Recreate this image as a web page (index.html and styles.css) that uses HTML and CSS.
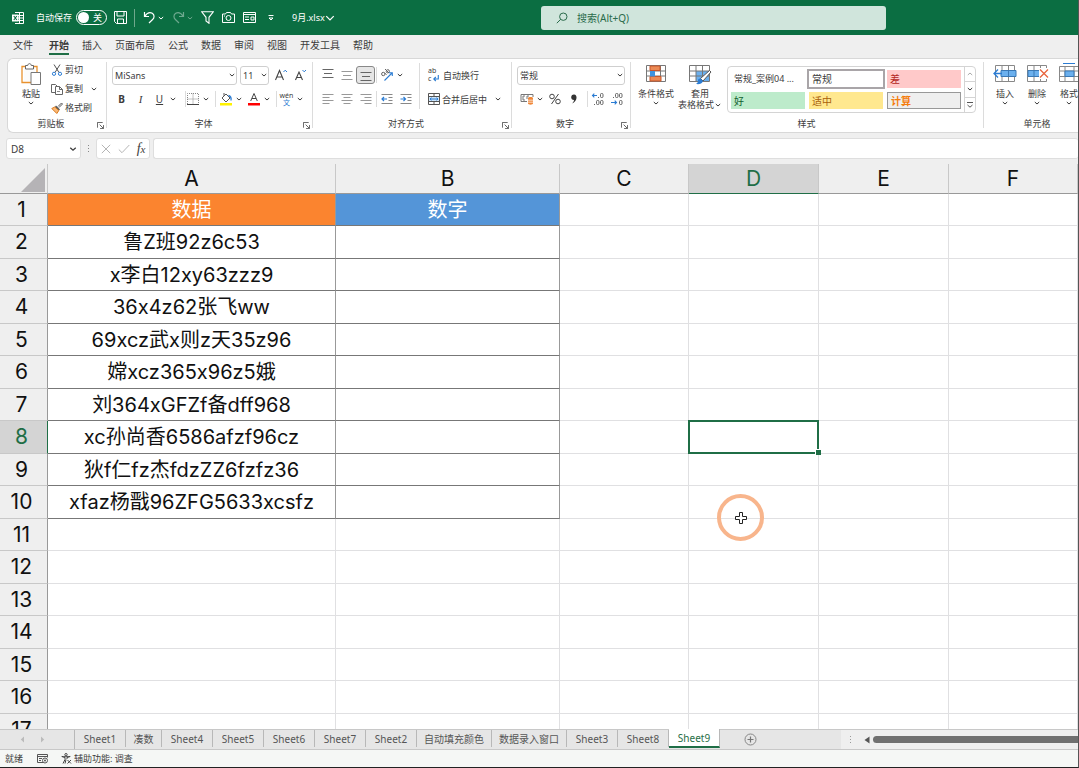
FILE: index.html
```html
<!DOCTYPE html>
<html lang="zh-CN">
<head>
    <meta charset="utf-8">
    <title>9月.xlsx</title>
    <link rel="stylesheet" href="styles.css">
</head>
<body>
    <svg class="sprite" aria-hidden="true">
        <symbol id="chev" viewBox="0 0 8 8"><path d="M1.800 3 4 5 6.200 3" fill="none" stroke="currentColor"/></symbol>
        <symbol id="launch" viewBox="0 0 8 8"><path d="M.5 6.500V.5H6.500M3 3l4 4M7.500 3.500v4h-4" fill="none" stroke="currentColor" stroke-width=".9"/></symbol>
    </svg>

    <header class="titlebar">
        <div class="quick">
            <svg class="logo" width="14" height="14" viewBox="0 0 14 14"><path d="M4 1.500h8.500v11H4M8.500 1.500v11M4 4.500h8.500M4 7h8.500M4 9.500h8.500" fill="none" stroke="#fff"/><path d="M1 3.500h6.500v7H1z" fill="#fff"/><path d="m2.800 5 3 4M5.800 5l-3 4" stroke="#0b6e42" stroke-width="1.100"/></svg>
            <span class="autosave-text">自动保存</span>
            <label class="switch"><input type="checkbox" aria-label="自动保存"><span>关</span></label>
            <button class="qbtn save" aria-label="保存"><svg width="13" height="13" viewBox="0 0 13 13"><path d="M.5.5h12v12h-10l-2-2zM3 .5v4.500h7V.5M3.500 12.500V8h6v4.500" fill="none" stroke="#fff"/></svg></button>
            <span class="qsep"></span>
            <button class="qbtn" aria-label="撤消"><svg width="13" height="13" viewBox="0 0 13 13"><path d="M1.500 1v4.500H6M1.700 5.300C4 2 7 .8 9.300 2.300c2.500 1.700 2 4.600.3 6.200L6 12" fill="none" stroke="#fff" stroke-width="1.200"/></svg></button>
            <svg class="qchev" width="8" height="8"><use href="#chev"/></svg>
            <button class="qbtn faded" aria-label="恢复"><svg width="13" height="13" viewBox="0 0 13 13"><path d="M11.500 1v4.500H7M11.300 5.300C9 2 6 .8 3.700 2.300c-2.500 1.700-2 4.600-.3 6.200L7 12" fill="none" stroke="#fff" stroke-width="1.200"/></svg></button>
            <svg class="qchev faded" width="8" height="8"><use href="#chev"/></svg>
            <button class="qbtn" aria-label="筛选"><svg width="13" height="13" viewBox="0 0 13 13"><path d="M.7.8h11.600L8 6.300v6L5 10V6.300z" fill="none" stroke="#fff" stroke-width="1.100"/></svg></button>
            <button class="qbtn wide" aria-label="照相机"><svg width="13" height="13" viewBox="0 0 13 13"><path d="M.5 3h3l1-1.500h4l1 1.500h3v8.500H.5z" fill="none" stroke="#fff"/><circle cx="6.500" cy="7" r="2.500" fill="none" stroke="#fff"/><path d="M2 5h1" stroke="#fff"/></svg></button>
            <button class="qbtn wide" aria-label="记录单"><svg width="13" height="13" viewBox="0 0 13 13"><path d="M.5 1.500h12v10H.5zM.5 3.500h12M2 6h4M2 8.500h4M8 6h3v3H8z" fill="none" stroke="#fff"/></svg></button>
            <button class="qbtn wide" aria-label="自定义"><svg width="8" height="8" viewBox="0 0 8 8"><path d="M1.500 1.500h5M2 4l2 2 2-2z" fill="none" stroke="#fff"/></svg></button>
            <button class="filename">9月.xlsx<svg width="10" height="10" viewBox="0 0 8 8"><path d="M1 2.500 4 5.500l3-3" fill="none" stroke="#fff"/></svg></button>
        </div>
        <label class="search">
            <svg width="12" height="12" viewBox="0 0 12 12"><circle cx="7.300" cy="4.700" r="3.700" fill="none" stroke="#2a6b4b"/><path d="M4.700 7.300.8 11.200" stroke="#2a6b4b"/></svg>
            <input type="text" placeholder="搜索(Alt+Q)">
        </label>
    </header>

    <nav class="menu">
        <button class="file">文件</button>
        <button class="active">开始</button>
        <button>插入</button>
        <button>页面布局</button>
        <button>公式</button>
        <button>数据</button>
        <button>审阅</button>
        <button>视图</button>
        <button>开发工具</button>
        <button>帮助</button>
    </nav>

    <section class="ribbon">
        <div class="group clipboard">
            <div class="body">
                <button class="big paste">
                    <svg width="22" height="22" viewBox="0 0 22 22"><path d="M2 3.500h15v16H2z" fill="#fff" stroke="#e8912d" stroke-width="1.300"/><path d="M4 5h11v13H4z" fill="#fbfbfb"/><path d="M5.500 2.500h2.200c.3-2.500 3.300-2.500 3.600 0h2.200V6h-8z" fill="#fff" stroke="#666"/><path d="M11 9.500h9.500v12H11z" fill="#fff" stroke="#777"/></svg>
                    <span>粘贴</span>
                    <svg width="8" height="8"><use href="#chev"/></svg>
                </button>
                <div class="stack">
                    <button class="cmd"><svg width="12" height="12" viewBox="0 0 12 12"><path d="M3 .5 8 8.500M9 .5 4 8.500" stroke="#555" fill="none"/><circle cx="3" cy="9.800" r="1.600" fill="none" stroke="#2b7cd3"/><circle cx="9" cy="9.800" r="1.600" fill="none" stroke="#2b7cd3"/></svg>剪切</button>
                    <button class="cmd"><svg width="12" height="12" viewBox="0 0 12 12"><path d="M4 9.500H.5V1.500h4l1.500 1.500" fill="none" stroke="#666"/><path d="M4.500 3.500h4l3 3v5h-7zM8.500 3.500v3h3" fill="#fff" stroke="#666"/><path d="M6 8.500h3" stroke="#888"/></svg>复制<svg class="far" width="8" height="8"><use href="#chev"/></svg></button>
                    <button class="cmd"><svg width="12" height="12" viewBox="0 0 12 12"><path d="M7 4.500 10.500 1l1 1L8 5.500" fill="#fff" stroke="#555"/><path d="M5 3.500 9 7.500 7.800 8.500 4 4.700z" fill="#555"/><path d="M3.800 5 .8 6.500l5 5 2-3z" fill="#f9b877" stroke="#d97a1c"/></svg>格式刷</button>
                </div>
            </div>
            <div class="caption">剪贴板<svg class="launch" width="7" height="7"><use href="#launch"/></svg></div>
        </div>

        <div class="group font">
            <div class="line">
                <label class="combo name"><select aria-label="字体"><option>MiSans</option></select><svg width="8" height="8"><use href="#chev"/></svg></label>
                <label class="combo size"><select aria-label="字号"><option>11</option></select><svg width="8" height="8"><use href="#chev"/></svg></label>
                <button class="tool" aria-label="增大字号"><svg width="14" height="14" viewBox="0 0 14 14"><path d="M.5 12 4.500 2.500 8.500 12M2 9h5" fill="none" stroke="#444" stroke-width="1.100"/><path d="m8.500 4 1.700-1.800L12 4" fill="none" stroke="#2b7cd3"/></svg></button>
                <button class="tool" aria-label="减小字号"><svg width="14" height="14" viewBox="0 0 14 14"><path d="M1.500 12 5 4l3.500 8M3 9.500h4" fill="none" stroke="#444" stroke-width="1.100"/><path d="m8.500 2 1.700 1.800L12 2" fill="none" stroke="#2b7cd3"/></svg></button>
            </div>
            <div class="line">
                <button class="tool"><b>B</b></button>
                <button class="tool"><i>I</i></button>
                <button class="tool"><u>U</u></button>
                <svg class="chev" width="8" height="8"><use href="#chev"/></svg>
                <span class="sep after-chev"></span>
                <button class="tool slim" aria-label="边框"><svg width="12" height="12" viewBox="0 0 12 12"><path d="M.5 11V.5h11V11M6 .5V11M.5 6h11" fill="none" stroke="#888" stroke-dasharray="1 1"/><path d="M0 11.500h12" stroke="#444"/></svg></button>
                <svg class="chev" width="8" height="8"><use href="#chev"/></svg>
                <span class="sep"></span>
                <button class="tool" aria-label="填充颜色"><svg width="14" height="14" viewBox="0 0 14 14"><path d="m3 6 4-4 4 4-4 4zM5 3.800V1" fill="none" stroke="#555"/><path d="M9.500 3.500c2 .5 3 2 2.500 5" fill="none" stroke="#2b7cd3" stroke-width="1.300"/><path d="M1 11h12v2.500H1z" fill="#fff200"/></svg></button>
                <svg class="chev" width="8" height="8"><use href="#chev"/></svg>
                <button class="tool" aria-label="字体颜色"><svg width="14" height="14" viewBox="0 0 14 14"><path d="M3.700 9 7 1.500 10.300 9M5 6.500h4" fill="none" stroke="#444"/><path d="M1 11h12v2.500H1z" fill="#f00"/></svg></button>
                <svg class="chev" width="8" height="8"><use href="#chev"/></svg>
                <span class="sep"></span>
                <button class="tool pinyin"><span>wén</span><em>文</em></button>
                <svg class="chev" width="8" height="8"><use href="#chev"/></svg>
            </div>
            <div class="caption">字体<svg class="launch" width="7" height="7"><use href="#launch"/></svg></div>
        </div>

        <div class="group align">
            <div class="body">
                <div class="stack">
                    <div class="line">
                        <button class="tool" aria-label="顶端对齐"><svg width="12" height="14" viewBox="0 0 12 14"><path d="M.5 1.500h11M2 5.500h8M.5 9.500h11" stroke="#666"/></svg></button>
                        <button class="tool" aria-label="垂直居中"><svg width="12" height="14" viewBox="0 0 12 14"><path d="M.5 3.500h11M2 7.500h8M.5 11.500h11" stroke="#999"/></svg></button>
                        <button class="tool pressed" aria-label="底端对齐"><svg width="12" height="14" viewBox="0 0 12 14"><path d="M.5 4.500h11M2 8.500h8M.5 12.500h11" stroke="#666"/></svg></button>
                        <span class="sep tight"></span>
                        <button class="tool" aria-label="方向"><svg width="14" height="14" viewBox="0 0 14 14"><circle cx="3.300" cy="6" r="1.700" fill="none" stroke="#666"/><path d="m4.500 4.800 2 2M5 1l4 4" stroke="#666"/><circle cx="7.800" cy="3.300" r="1.600" fill="none" stroke="#666"/><path d="M4.500 12.500 12 5M9 4.700h3.300V8" fill="none" stroke="#2b7cd3" stroke-width="1.100"/></svg></button>
                        <svg class="chev" width="8" height="8"><use href="#chev"/></svg>
                    </div>
                    <div class="line">
                        <button class="tool" aria-label="左对齐"><svg width="12" height="12" viewBox="0 0 12 12"><path d="M.5 1.500h11M.5 4.500h7M.5 7.500h11M.5 10.500h7" stroke="#999"/></svg></button>
                        <button class="tool" aria-label="居中"><svg width="12" height="12" viewBox="0 0 12 12"><path d="M.5 1.500h11M2.500 4.500h7M.5 7.500h11M2.500 10.500h7" stroke="#999"/></svg></button>
                        <button class="tool" aria-label="右对齐"><svg width="12" height="12" viewBox="0 0 12 12"><path d="M.5 1.500h11M4.500 4.500h7M.5 7.500h11M4.500 10.500h7" stroke="#999"/></svg></button>
                        <span class="sep tight"></span>
                        <button class="tool" aria-label="减少缩进"><svg width="12" height="12" viewBox="0 0 12 12"><path d="M.5 1.500h11M7.500 4.500h4M7.500 7.500h4M.5 10.500h11" stroke="#888"/><path d="M6 6H1M3 4 1 6l2 2" fill="none" stroke="#2b7cd3" stroke-width="1.200"/></svg></button>
                        <button class="tool" aria-label="增加缩进"><svg width="12" height="12" viewBox="0 0 12 12"><path d="M.5 1.500h11M7.500 4.500h4M7.500 7.500h4M.5 10.500h11" stroke="#888"/><path d="M.5 6h5M3.500 4l2 2-2 2" fill="none" stroke="#2b7cd3" stroke-width="1.200"/></svg></button>
                    </div>
                </div>
                <span class="sep long"></span>
                <div class="stack">
                    <div class="line">
                        <button class="cmd"><span class="wrap-icon"><span>ab</span><span>c<svg width="6" height="7" viewBox="0 0 6 7"><path d="M5.300 0v4H.8M2.800 2l-2 2 2 2" fill="none" stroke="#2b7cd3" stroke-width="1.100"/></svg></span></span>自动换行</button>
                    </div>
                    <div class="line">
                        <button class="cmd"><svg width="12" height="12" viewBox="0 0 12 12"><path d="M.5 3.500h11v5H.5z" fill="#cfe6fa"/><path d="M.5.5h11v11H.5zM.5 3.500h11M.5 8.500h11M6 .5v3M6 8.500v3" fill="none" stroke="#555"/><path d="M2 6h8M3.500 4.700 2 6l1.500 1.300M8.500 4.700 10 6 8.500 7.300" fill="none" stroke="#2b7cd3"/></svg>合并后居中<svg class="far" width="8" height="8"><use href="#chev"/></svg></button>
                    </div>
                </div>
            </div>
            <div class="caption">对齐方式<svg class="launch" width="7" height="7"><use href="#launch"/></svg></div>
        </div>

        <div class="group number">
            <div class="line">
                <label class="combo format"><select aria-label="数字格式"><option>常规</option></select><svg width="8" height="8"><use href="#chev"/></svg></label>
            </div>
            <div class="line">
                <button class="tool" aria-label="会计数字格式"><svg width="14" height="14" viewBox="0 0 14 14"><path d="M13 5V2.500H1v7h6" fill="none" stroke="#777"/><path d="M5 4H3v4h2M9 4H7v3" fill="none" stroke="#777"/><path d="M8 6c0-1.500 5-1.500 5 0v5.500c0 1.500-5 1.500-5 0z" fill="#f0883a"/><path d="M8 8.200h5M8 10.200h5" stroke="#fff" stroke-width=".7"/></svg></button>
                <svg class="chev" width="8" height="8"><use href="#chev"/></svg>
                <button class="tool" aria-label="百分比"><svg width="12" height="12" viewBox="0 0 12 12"><circle cx="3" cy="3.500" r="2.300" fill="none" stroke="#444"/><circle cx="9" cy="8.500" r="2.300" fill="none" stroke="#444"/><path d="M9.500 1 2.500 11" stroke="#444"/></svg></button>
                <button class="tool" aria-label="千位分隔"><svg width="8" height="12" viewBox="0 0 8 12"><path d="M4 1.500c3.500 0 4 6.500-2 9C3.500 9 4 8 4 7 .3 7 .3 1.500 4 1.500z" fill="#333"/></svg></button>
                <span class="sep"></span>
                <button class="tool" aria-label="增加小数位数"><svg width="14" height="14" viewBox="0 0 14 14"><path d="M6 3.500H1.500M3.300 1.700 1.500 3.500l1.800 1.800" fill="none" stroke="#2b7cd3" stroke-width="1.100"/><rect x="9.500" y="1.500" width="2.500" height="4" rx="1" fill="none" stroke="#666"/><rect x="5.500" y="8.500" width="2.500" height="4" rx="1" fill="none" stroke="#666"/><rect x="9.500" y="8.500" width="2.500" height="4" rx="1" fill="none" stroke="#666"/><path d="M3 12.500h1M7 5.500h1" stroke="#666"/></svg></button>
                <button class="tool" aria-label="减少小数位数"><svg width="14" height="14" viewBox="0 0 14 14"><path d="M1 10.500h5.500M4.700 8.700l1.800 1.800-1.800 1.800" fill="none" stroke="#2b7cd3" stroke-width="1.100"/><rect x="5.500" y="1.500" width="2.500" height="4" rx="1" fill="none" stroke="#666"/><rect x="9.500" y="1.500" width="2.500" height="4" rx="1" fill="none" stroke="#666"/><rect x="9.500" y="8.500" width="2.500" height="4" rx="1" fill="none" stroke="#666"/><path d="M3 5.500h1" stroke="#666"/></svg></button>
            </div>
            <div class="caption">数字<svg class="launch" width="7" height="7"><use href="#launch"/></svg></div>
        </div>

        <div class="group styles">
            <div class="body">
                <button class="big cond">
                    <svg width="22" height="22" viewBox="0 0 22 22"><path d="M1.500 2.500h19v16h-19zM1.500 8h19M1.500 13h19M6 2.500v16M15.500 2.500v16" fill="#fff" stroke="#777"/><path d="M5 3h10v4.500H5zM5 13.500h11v4.500H5z" fill="#ec8a55" stroke="#c9562a"/><path d="M5 8h5v5.500H5z" fill="#3e93e0"/></svg>
                    <span>条件格式</span>
                    <svg width="8" height="8"><use href="#chev"/></svg>
                </button>
                <button class="big tablefmt">
                    <svg width="24" height="22" viewBox="0 0 24 22"><path d="M1.500 2.500h20v16h-20z" fill="#fff"/><path d="M8 8h13v10H8z" fill="#6bb0ee"/><path d="M1.500 2.500h20v16h-20zM1.500 8h20M1.500 13h20M8 2.500v16M14.500 2.500v16" fill="none" stroke="#777"/><path d="m21.500 7.500 1.500 1.500-8 9-2.500-2.500z" fill="#fff" stroke="#555"/><path d="M12.500 15.500 15 18c-1 3-4 3.500-7 3 1.500-1 2-2 2-3.500 0-1.200 1-2.200 2.500-2z" fill="#2b7cd3"/></svg>
                    <span>套用</span>
                    <span>表格格式<svg width="8" height="8"><use href="#chev"/></svg></span>
                </button>
                <div class="gallery">
                    <div class="cells">
                        <button>常规_案例04 ...</button>
                        <button class="normal">常规</button>
                        <button class="bad">差</button>
                        <button class="good">好</button>
                        <button class="neutral">适中</button>
                        <button class="calc">计算</button>
                    </div>
                    <div class="scroll">
                        <button aria-label="上一行"><svg class="up" width="8" height="8"><use href="#chev"/></svg></button>
                        <button aria-label="下一行"><svg width="8" height="8"><use href="#chev"/></svg></button>
                        <button aria-label="其他"><svg width="8" height="8" viewBox="0 0 8 8"><path d="M1 1.500h6M1.500 4 4 6.200 6.500 4" fill="none" stroke="#555"/></svg></button>
                    </div>
                </div>
            </div>
            <div class="caption plain">样式</div>
        </div>

        <div class="group edit">
            <div class="body">
                <button class="big">
                    <svg width="24" height="22" viewBox="0 0 24 22"><path d="M2.500 2.500h19v16h-19zM9 2.500v16M15.500 2.500v16" fill="#fff" stroke="#888"/><path d="M8 7.500h15v6H8z" fill="#6bb0ee" stroke="#3a78b5"/><path d="M15.500 7.500v6" stroke="#3a78b5"/><path d="M9 10.500H1.500M5 6.500l-4 4 4 4" fill="none" stroke="#2b7cd3" stroke-width="1.300"/></svg>
                    <span>插入</span>
                    <svg width="8" height="8"><use href="#chev"/></svg>
                </button>
                <button class="big">
                    <svg width="24" height="22" viewBox="0 0 24 22"><path d="M2.500 2.500h19v16h-19zM9 2.500v16M15.500 2.500v16" fill="#fff" stroke="#888"/><path d="M3 7.500h12v6H3z" fill="#6bb0ee" stroke="#3a78b5"/><path d="M9 7.500v6" stroke="#3a78b5"/><path d="M14 5h9v11h-9z" fill="#fff"/><path d="m15 6.500 8 8M23 6.500l-8 8" stroke="#e8643c" stroke-width="1.300"/></svg>
                    <span>删除</span>
                    <svg width="8" height="8"><use href="#chev"/></svg>
                </button>
                <button class="big">
                    <svg width="24" height="22" viewBox="0 0 24 22"><path d="M2.500 3.500h19v15h-19zM8 3.500v15M17 3.500v15" fill="#fff" stroke="#888"/><path d="M2.500 8h19M2.500 13.500h19" stroke="#888"/><path d="M8 8h9v5.500H8z" fill="#6bb0ee" stroke="#3a78b5"/><path d="M6 .5h12" stroke="#2b7cd3"/></svg>
                    <span>格式</span>
                    <svg width="8" height="8"><use href="#chev"/></svg>
                </button>
            </div>
            <div class="caption plain">单元格</div>
        </div>
    </section>

    <section class="formula">
        <label class="namebox"><input type="text" value="D8" aria-label="名称框"><svg width="10" height="10"><use href="#chev"/></svg></label>
        <svg class="grip" width="3" height="10" viewBox="0 0 3 10"><path d="M1.500 1v9" stroke="#888" stroke-dasharray="1 2"/></svg>
        <div class="fx">
            <button aria-label="取消"><svg width="10" height="10" viewBox="0 0 10 10"><path d="m.8.8 8.400 8.400M9.200.8.8 9.200" stroke="#b5b5b5"/></svg></button>
            <button aria-label="输入"><svg width="12" height="10" viewBox="0 0 12 10"><path d="M.8 5.500 4 8.700 11.300 1" fill="none" stroke="#b5b5b5"/></svg></button>
            <button class="fn">f<small>x</small></button>
        </div>
        <input class="content" type="text" aria-label="编辑栏">
    </section>

    <main class="sheet">
        <table>
            <colgroup>
                <col class="c-head"><col class="c-a"><col class="c-b"><col class="c-c"><col class="c-d"><col class="c-d"><col>
            </colgroup>
            <thead>
                <tr><th class="corner"><svg width="24" height="24" viewBox="0 0 24 24"><path d="M24 0v24H0z" fill="#b5b3b6"/></svg></th><th>A</th><th>B</th><th>C</th><th class="on">D</th><th>E</th><th>F</th></tr>
            </thead>
            <tbody>
                <tr><th>1</th><td class="box orange">数据</td><td class="box blue">数字</td><td></td><td></td><td></td><td></td></tr>
                <tr><th>2</th><td class="box">鲁Z班92z6c53</td><td class="box"></td><td></td><td></td><td></td><td></td></tr>
                <tr><th>3</th><td class="box">x李白12xy63zzz9</td><td class="box"></td><td></td><td></td><td></td><td></td></tr>
                <tr><th>4</th><td class="box">36x4z62张飞ww</td><td class="box"></td><td></td><td></td><td></td><td></td></tr>
                <tr><th>5</th><td class="box">69xcz武x则z天35z96</td><td class="box"></td><td></td><td></td><td></td><td></td></tr>
                <tr><th>6</th><td class="box">嫦xcz365x96z5娥</td><td class="box"></td><td></td><td></td><td></td><td></td></tr>
                <tr><th>7</th><td class="box">刘364xGFZf备dff968</td><td class="box"></td><td></td><td></td><td></td><td></td></tr>
                <tr><th class="on">8</th><td class="box">xc孙尚香6586afzf96cz</td><td class="box"></td><td></td><td class="selected"></td><td></td><td></td></tr>
                <tr><th>9</th><td class="box">狄f仁fz杰fdzZZ6fzfz36</td><td class="box"></td><td></td><td></td><td></td><td></td></tr>
                <tr><th>10</th><td class="box">xfaz杨戬96ZFG5633xcsfz</td><td class="box"></td><td></td><td></td><td></td><td></td></tr>
                <tr><th>11</th><td></td><td></td><td></td><td></td><td></td><td></td></tr>
                <tr><th>12</th><td></td><td></td><td></td><td></td><td></td><td></td></tr>
                <tr><th>13</th><td></td><td></td><td></td><td></td><td></td><td></td></tr>
                <tr><th>14</th><td></td><td></td><td></td><td></td><td></td><td></td></tr>
                <tr><th>15</th><td></td><td></td><td></td><td></td><td></td><td></td></tr>
                <tr><th>16</th><td></td><td></td><td></td><td></td><td></td><td></td></tr>
                <tr><th>17</th><td></td><td></td><td></td><td></td><td></td><td></td></tr>
            </tbody>
        </table>
        <div class="pointer"><svg width="12" height="12" viewBox="0 0 12 12"><path d="M4.500.5h3v4h4v3h-4v4h-3v-4h-4v-3h4z" fill="#fff" stroke="#222"/></svg></div>
    </main>

    <footer>
        <div class="tabs">
            <div class="arrows">
                <button aria-label="向左"><svg width="5" height="7" viewBox="0 0 5 7"><path d="M4 .5v6L.8 3.500z" fill="#bbb"/></svg></button>
                <button aria-label="向右"><svg width="5" height="7" viewBox="0 0 5 7"><path d="M1 .5v6l3.200-3z" fill="#bbb"/></svg></button>
            </div>
            <button class="tab">Sheet1</button>
            <button class="tab short">凑数</button>
            <button class="tab">Sheet4</button>
            <button class="tab">Sheet5</button>
            <button class="tab">Sheet6</button>
            <button class="tab">Sheet7</button>
            <button class="tab">Sheet2</button>
            <button class="tab">自动填充颜色</button>
            <button class="tab">数据录入窗口</button>
            <button class="tab">Sheet3</button>
            <button class="tab">Sheet8</button>
            <button class="tab current">Sheet9</button>
            <button class="add" aria-label="新工作表"><svg width="13" height="13" viewBox="0 0 13 13"><circle cx="6.500" cy="6.500" r="5.500" fill="none" stroke="#888"/><path d="M6.500 3.500v6M3.500 6.500h6" stroke="#777" stroke-width="1.200"/></svg></button>
            <div class="hscroll">
                <svg class="grip" width="3" height="10" viewBox="0 0 3 10"><path d="M1.500 1v9" stroke="#999" stroke-dasharray="1 2"/></svg>
                <svg width="6" height="8" viewBox="0 0 6 8"><path d="M5.500.5v7L.5 4z" fill="#555"/></svg>
                <span class="thumb"></span>
            </div>
        </div>
        <div class="status">
            <span>就绪</span>
            <svg width="12" height="10" viewBox="0 0 12 10"><path d="M6 8.500H.5v-8h10v3M.5 2.500h10M2 4.500h3M2 6.500h2" fill="none" stroke="#555"/><circle cx="8" cy="6.500" r="2.500" fill="none" stroke="#555"/><circle cx="8" cy="6.500" r="1" fill="#555"/></svg>
            <svg class="access" width="11" height="11" viewBox="0 0 11 11"><circle cx="5" cy="1.700" r="1.200" fill="none" stroke="#444"/><path d="M.8 3.500 4 4.500v2L2 10.500M9.200 3.500 6 4.500v1.500M.8 3.500c2 .3 6 .3 8.400 0M5 6.500l-1 4M6.500 7l3.500 3.500M10 7l-3.500 3.500" fill="none" stroke="#444"/></svg>
            <span>辅助功能: 调查</span>
        </div>
    </footer>
</body>
</html>
```
FILE: styles.css
```css
* {
    box-sizing: border-box;
}
body {
    margin: 0;
    height: 100vh;
    display: flex;
    flex-direction: column;
    overflow: hidden;
    background: #efefef;
    border-right: 1px solid #555;
    border-bottom: 1px solid #222;
    font-family: "Noto Sans", "Noto Sans CJK SC", sans-serif;
    font-size: 9px;
    color: #3c3c3c;
}
button, input, select {
    margin: 0;
    padding: 0;
    border: 0;
    background: none;
    font: inherit;
    color: inherit;
    outline: none;
}
button {
    display: flex;
    align-items: center;
    justify-content: center;
    white-space: nowrap;
}
svg {
    flex: none;
    display: block;
}
.sprite {
    position: absolute;
    width: 0;
    height: 0;
}

/* title bar */
.titlebar {
    flex: none;
    display: flex;
    align-items: center;
    height: 35px;
    background: #0b6e42;
    color: #fff;
}
.quick {
    flex: 0 0 50%;
    display: flex;
    align-items: center;
    padding-left: 11px;
}
.autosave-text {
    margin-left: 11px;
    white-space: nowrap;
}
.switch {
    display: flex;
    align-items: center;
    justify-content: space-between;
    width: 31px;
    height: 15px;
    margin-left: 4px;
    padding: 0 4px 0 1px;
    border: 1px solid #fff;
    border-radius: 8px;
}
.switch input {
    appearance: none;
    width: 11px;
    height: 11px;
    border-radius: 50%;
    background: #fff;
}
.qbtn {
    width: 13px;
    height: 20px;
}
.qbtn.save {
    margin-left: 7px;
}
.qsep {
    width: 1px;
    height: 18px;
    margin: 0 8px 0 7px;
    background: #6fa88c;
}
.qchev {
    margin: 0 7px 0 1px;
}
.faded {
    opacity: 0.4;
}
.qbtn.wide {
    margin-left: 8px;
}
.filename {
    margin-left: 15px;
}
.search {
    display: flex;
    align-items: center;
    width: 32%;
    height: 24px;
    margin-left: 2px;
    padding-left: 15px;
    border-radius: 3px;
    background: #d0e5dc;
}
.search input {
    flex: 1;
    margin-left: 9px;
    font-size: 10px;
}
.search input::placeholder {
    color: #2a6b4b;
}

/* menu */
.menu {
    flex: none;
    display: flex;
    gap: 13px;
    height: 23px;
    padding-left: 13px;
    font-size: 10px;
}
.menu button {
    height: 20px;
    border-bottom: 2px solid transparent;
}
.menu .file {
    margin-right: 3px;
}
.menu .active {
    font-weight: bold;
    border-bottom-color: #1f6e46;
}

/* ribbon */
.ribbon {
    flex: none;
    display: flex;
    overflow: hidden;
    height: 75px;
    margin-left: 7px;
    border: 1px solid #d8d8d8;
    border-right: 0;
    border-radius: 6px 0 0 6px;
    background: #fff;
}
.group {
    flex: none;
    position: relative;
    margin-right: 1px;
    padding: 4px 0 0 5px;
}
.group::after {
    content: "";
    position: absolute;
    top: 3px;
    right: -1px;
    bottom: 4px;
    width: 1px;
    background: #dcdcdc;
}
.clipboard {
    width: 98px;
}
.font {
    width: 205px;
}
.align {
    width: 198px;
}
.number {
    width: 118px;
}
.styles {
    width: 352px;
}
.edit {
    width: 107px;
}
.body {
    display: flex;
    height: 48px;
}
.line {
    display: flex;
    align-items: center;
    height: 24px;
}
.caption {
    position: relative;
    height: 16px;
    margin-top: 5px;
    padding-right: 17px;
    line-height: 16px;
    text-align: center;
}
.caption.plain {
    padding-right: 6px;
}
.launch {
    position: absolute;
    right: 2px;
    top: 6px;
}
.big {
    flex: none;
    flex-direction: column;
    justify-content: flex-start;
    width: 32px;
    height: 48px;
    line-height: 11px;
}
.big > svg:first-child {
    margin-bottom: 3px;
}
.big span {
    display: flex;
    align-items: center;
}
.paste {
    width: 36px;
}
.stack {
    display: flex;
    flex-direction: column;
}
.clipboard .stack {
    margin: -3px 0 0 2px;
}
.cmd {
    flex: none;
    height: 19px;
    justify-content: flex-start;
    gap: 2px;
}
.far {
    margin-left: 5px;
}
.combo {
    display: flex;
    align-items: center;
    height: 19px;
    margin-right: 3px;
    border: 1px solid #cfcfcf;
    border-radius: 3px;
}
.combo select {
    appearance: none;
    flex: 1;
    min-width: 0;
    padding-left: 2px;
}
.combo.name {
    width: 125px;
}
.combo.size {
    width: 29px;
}
.combo.format {
    width: 108px;
}
.tool {
    width: 19px;
    height: 18px;
    font-size: 10px;
}
.tool i {
    font-family: "Liberation Serif", serif;
    font-size: 11px;
}
.slim {
    width: 13px;
    margin-right: 3px;
}
.pressed {
    border: 1px solid #888;
    border-radius: 3px;
    background: #e6e6e6;
}
.pinyin {
    flex-direction: column;
    font-size: 7px;
    line-height: 7px;
}
.pinyin em {
    font-style: normal;
    color: #2b7cd3;
}
.wrap-icon {
    width: 13px;
    font-size: 7px;
    line-height: 8px;
    text-align: left;
}
.wrap-icon span {
    display: flex;
    gap: 2px;
}
.chev {
    margin-right: 1px;
}
.sep {
    width: 1px;
    height: 16px;
    margin-left: 4px;
    background: #dcdcdc;
}
.sep.after-chev {
    margin-left: 7px;
}
.sep.tight {
    margin-left: 1px;
}
.sep.long {
    height: 46px;
    margin: 0 8px 0 4px;
}
.cond {
    width: 40px;
}
.tablefmt {
    width: 48px;
}
.gallery {
    display: flex;
    width: 249px;
    height: 47px;
    margin: 3px 0 0 3px;
    border: 1px solid #d4d4d4;
    border-radius: 4px;
}
.cells {
    flex: 1;
    display: grid;
    grid-template-columns: repeat(3, 1fr);
    gap: 2px;
    padding: 2px;
}
.cells button {
    justify-content: flex-start;
    margin: 1px;
    padding-left: 3px;
    font-size: 10px;
}
.cells button:first-child {
    font-size: 9px;
}
.cells .normal {
    margin: 0 -1px;
    border: 2px solid #a9a5a8;
}
.bad {
    background: #ffc9c9;
    color: #b3261e;
}
.good {
    background: #bdebcb;
    color: #12602f;
}
.neutral {
    background: #ffe88f;
    color: #a95f0a;
}
.cells .calc {
    border: 1px solid #999;
    background: #efefef;
    color: #f57c0c;
    font-weight: bold;
}
.scroll {
    display: flex;
    flex-direction: column;
    width: 11px;
    border-left: 1px solid #d4d4d4;
}
.scroll button {
    flex: 1;
}
.scroll button + button {
    border-top: 1px solid #d4d4d4;
}
.scroll .up {
    color: #aaa;
    transform: rotate(180deg);
}

/* formula bar */
.formula {
    flex: none;
    display: flex;
    align-items: center;
    height: 31px;
    padding-left: 6px;
}
.formula .namebox,
.fx,
.content {
    height: 21px;
    border: 1px solid #dedede;
    border-radius: 3px;
    background: #fff;
}
.namebox {
    display: flex;
    align-items: center;
    width: 75px;
    padding: 0 2px 0 4px;
    font-size: 10px;
}
.namebox input {
    flex: 1;
    min-width: 0;
}
.formula .grip {
    margin: 0 6px;
}
.fx {
    display: flex;
    align-items: center;
    justify-content: space-around;
    width: 54px;
}
.fn {
    font-family: "Liberation Serif", serif;
    font-style: italic;
    font-size: 14px;
}
.fn small {
    font-size: 11px;
}
.content {
    flex: 1;
    margin-left: 3px;
    border-right: 0;
}

/* grid */
.sheet {
    flex: 1;
    min-height: 0;
    position: relative;
    overflow: hidden;
    background: #fff;
}
table {
    width: 100%;
    table-layout: fixed;
    border-collapse: separate;
    border-spacing: 0;
    font-family: Inter, "Noto Sans CJK SC", sans-serif;
    font-size: 20px;
    font-variant-ligatures: no-contextual;
    line-height: 30px;
    color: #111;
}
.c-head {
    width: 48px;
}
.c-a {
    width: 288px;
}
.c-b {
    width: 224px;
}
.c-c {
    width: 129px;
}
.c-d {
    width: 130px;
}
th, td {
    padding: 0;
    border-right: 1px solid #e0e0e2;
    border-bottom: 1px solid #e0e0e2;
    text-align: center;
    white-space: nowrap;
}
th {
    background: #efefef;
    border-color: #c8c8c8;
    font-size: 21px;
    font-weight: normal;
}
thead th {
    height: 30px;
    line-height: 28px;
    border-bottom-color: #999;
}
tbody tr {
    height: 32px;
}
tbody tr:nth-child(even) {
    height: 33px;
}
tbody th {
    padding-right: 4px;
    border-right-color: #999;
}
.corner svg {
    margin: 3px 0 0 21px;
}
th.on {
    background: #d4d4d4;
    color: #1f6e46;
}
thead .on {
    border-bottom-color: #1f6e46;
}
tbody th.on {
    border-right-color: #1f6e46;
}
.box {
    border-right-color: #999;
    border-bottom-color: #777;
}
.orange {
    background: #fb842f;
    color: #fff;
}
.blue {
    background: #5495d8;
    color: #fff;
}
.selected {
    position: relative;
}
.selected::before {
    content: "";
    position: absolute;
    inset: -1px;
    border: 2px solid #1f6e46;
}
.selected::after {
    content: "";
    position: absolute;
    right: -3px;
    bottom: -2px;
    width: 5px;
    height: 5px;
    border: 1px solid #fff;
    border-width: 1px 0 0 1px;
    background: #1f6e46;
}
.pointer {
    position: absolute;
    left: 717px;
    top: 330px;
    display: flex;
    align-items: center;
    justify-content: center;
    width: 47px;
    height: 47px;
    border: 4px solid #f8b58c;
    border-radius: 50%;
}

/* bottom bars */
footer {
    flex: none;
}
.tabs {
    display: flex;
    height: 21px;
    background: #e6e6e6;
    border-top: 1px solid #c8c8c8;
    border-bottom: 1px solid #c8c8c8;
    font-size: 10px;
    color: #555;
}
.arrows {
    display: flex;
    justify-content: center;
    gap: 15px;
    width: 75px;
    padding-right: 10px;
    border-right: 1px solid #b8b8b8;
}
.tab {
    min-width: 51px;
    height: 17px;
    padding: 0 7px;
    border-right: 1px solid #b8b8b8;
}
.tab.short {
    min-width: 36px;
}
.tab.current {
    height: 19px;
    margin-top: -1px;
    border-bottom: 2px solid #1f6e46;
    background: #fff;
    color: #1f6e46;
}
.add {
    width: 60px;
}
.hscroll {
    display: flex;
    align-items: center;
    width: 22%;
    margin-left: auto;
    background: #efefef;
}
.hscroll .grip {
    margin: 0 12px 0 8px;
}
.thumb {
    flex: 1;
    height: 7px;
    margin-left: 3px;
    border-radius: 4px 0 0 4px;
    background: #707070;
}
.status {
    display: flex;
    align-items: center;
    height: 17px;
    padding-left: 5px;
    background: #f5f7f5;
}
.status svg {
    margin-left: 14px;
}
.status .access {
    margin: 0 2px 0 12px;
}
```
